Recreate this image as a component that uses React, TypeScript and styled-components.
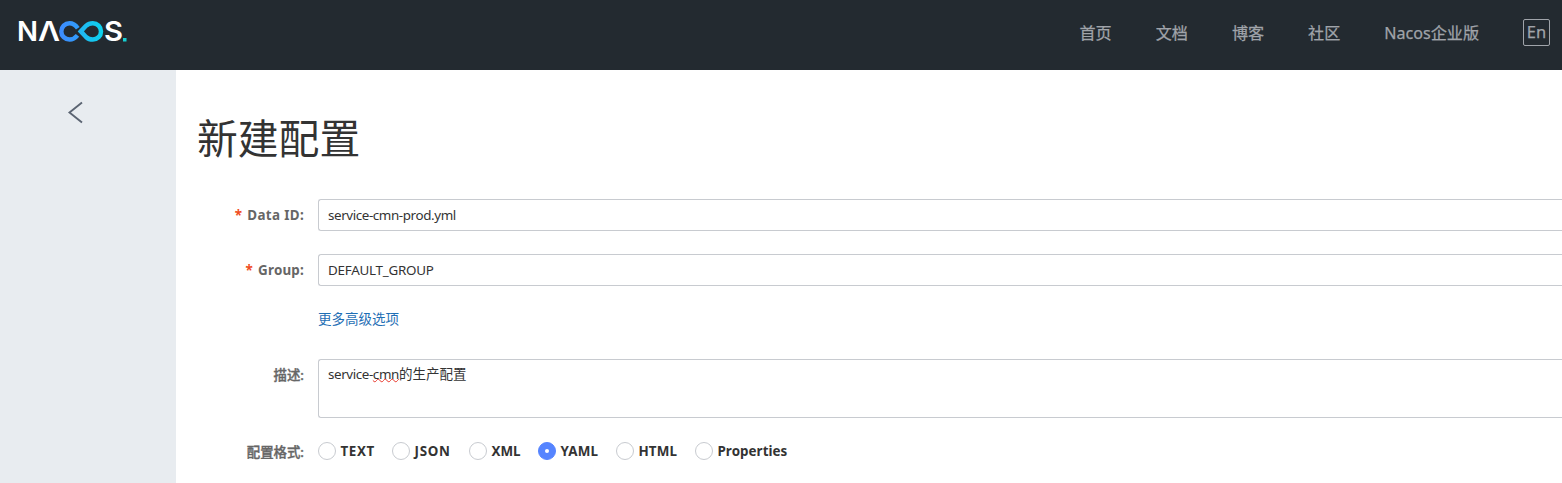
import React from "react";
import styled, { createGlobalStyle } from "styled-components";

const GlobalStyle = createGlobalStyle`
  * { box-sizing: border-box; }
  html, body { margin: 0; height: 100%; overflow: hidden; background: #fff; }
  body { font-family: "Noto Sans", "Noto Sans CJK SC", sans-serif; font-size: 13.4px; color: #333; }
`;

const Page = styled.div`
  height: 483px;
  display: flex;
  flex-direction: column;
  overflow: hidden;
`;

const Header = styled.header`
  height: 70px;
  flex: none;
  display: flex;
  justify-content: space-between;
  background: #232a30;
  padding: 0 12px 0 14px;
`;

const Logo = styled.svg`
  width: 120px;
  height: 44px;
  margin-top: 10px;
  display: block;
  overflow: visible;
`;

const Nav = styled.nav`
  display: flex;
  height: 66px;
  align-items: center;
  gap: 44px;
`;

const NavLink = styled.a`
  color: #a0a4aa;
  font-size: 16.1px;
  line-height: 24px;
  white-space: nowrap;
  -webkit-text-stroke: 0.25px #a0a4aa;
`;

const LangButton = styled.button`
  width: 27px;
  height: 27px;
  margin-top: -2px;
  padding: 0 0 2px;
  border: 1px solid #a0a4aa;
  border-radius: 2px;
  background: transparent;
  color: #a0a4aa;
  font: 16.5px/23px "Noto Sans", sans-serif;
  -webkit-text-stroke: 0.25px #a0a4aa;
`;

const Body = styled.div`
  flex: 1;
  display: flex;
  min-height: 0;
`;

const Sidebar = styled.aside`
  width: 176px;
  flex: none;
  background: #e8ecf0;
  padding: 31px 0 0 67px;
`;

const BackIcon = styled.svg`
  width: 17px;
  height: 23px;
  display: block;
`;

const Main = styled.main`
  flex: 1;
  min-width: 0;
  padding: 37px 0 0 21px;
`;

const Title = styled.h1`
  margin: 0 0 32px;
  height: 60px;
  font-size: 40.8px;
  line-height: 60px;
  font-weight: 400;
  color: #333;
  font-family: "Noto Sans CJK SC", sans-serif;
`;

const Field = styled.div<{ $height: number; $gap: number }>`
  display: flex;
  align-items: flex-start;
  height: ${(p) => p.$height}px;
  margin-bottom: ${(p) => p.$gap}px;
`;

const Label = styled.label<{ $spacing?: number; $cjk?: boolean; $line?: number }>`
  width: 107px;
  margin-right: 14px;
  flex: none;
  text-align: right;
  line-height: ${(p) => p.$line ?? 32}px;
  font-weight: ${(p) => (p.$cjk ? 500 : 700)};
  color: #666;
  letter-spacing: ${(p) => p.$spacing ?? 0}px;
  -webkit-text-stroke: ${(p) => (p.$cjk ? 0.35 : 0)}px #666;
  white-space: nowrap;
`;

const Required = styled.span`
  color: #f04e23;
  margin-right: 5px;
`;

const Control = styled.div`
  flex: 1;
  height: 100%;
  border: 1px solid #c8cbd0;
  border-right: 0;
  border-radius: 3px 0 0 3px;
  padding-left: 9px;
  line-height: 31px;
`;

const Multiline = styled(Control)`
  line-height: 20px;
  padding-top: 4px;
`;

const Value = styled.span<{ $spacing?: number; $size?: number }>`
  font-size: ${(p) => p.$size ?? 13.4}px;
  letter-spacing: ${(p) => p.$spacing ?? 0}px;
`;

const Misspelled = styled.span`
  text-decoration: underline wavy #e8382c 1px;
  text-decoration-skip-ink: none;
  text-underline-offset: -0.5px;
`;

const MoreLink = styled.a`
  color: #1f6fb5;
  font-size: 13.5px;
  line-height: 20px;
`;

const Options = styled.div`
  display: flex;
  align-items: center;
  height: 20px;
`;

const Option = styled.label<{ $width: number; $spacing: number }>`
  display: flex;
  align-items: center;
  width: ${(p) => p.$width}px;
  font-weight: 700;
  line-height: 20px;
  letter-spacing: ${(p) => p.$spacing}px;
  white-space: nowrap;
`;

const Radio = styled.span<{ $checked: boolean }>`
  width: 18px;
  height: 18px;
  flex: none;
  margin-right: 4.5px;
  display: flex;
  align-items: center;
  justify-content: center;
  border-radius: 50%;
  border: 1px solid ${(p) => (p.$checked ? "#5584ff" : "#c8cbd0")};
  background: ${(p) => (p.$checked ? "#5584ff" : "#fff")};
  &::after {
    content: "";
    width: 4px;
    height: 4px;
    border-radius: 50%;
    background: #fff;
  }
`;

const formats = [
  { name: "TEXT", width: 74, spacing: 0.6 },
  { name: "JSON", width: 77, spacing: 0.7 },
  { name: "XML", width: 69, spacing: 0 },
  { name: "YAML", width: 78, spacing: 0.2 },
  { name: "HTML", width: 79, spacing: 0.1 },
  { name: "Properties", width: 100, spacing: 0.05 },
];

const links = ["首页", "文档", "博客", "社区", "Nacos企业版"];

export default function App() {
  return (
    <Page>
      <GlobalStyle />
      <Header>
        <Logo viewBox="14 10 120 44" aria-label="Nacos">
          <defs>
            <linearGradient id="loopLeft" x1="59" x2="80" y1="0" y2="0" gradientUnits="userSpaceOnUse">
              <stop stopColor="#3e8bff" />
              <stop offset="1" stopColor="#2f9dfa" />
            </linearGradient>
            <linearGradient id="loopRight" x1="78" x2="103" y1="0" y2="0" gradientUnits="userSpaceOnUse">
              <stop stopColor="#24b4f3" />
              <stop offset="1" stopColor="#0bd3ee" />
            </linearGradient>
          </defs>
          <g fill="#fff" fontFamily="Inter, sans-serif" fontWeight="600" fontSize="27.5">
            <text x="17" y="41" textLength="21" lengthAdjust="spacingAndGlyphs">N</text>
            <text x="38" y="41" textLength="22" lengthAdjust="spacingAndGlyphs">Λ</text>
            <text x="104" y="41" textLength="19" lengthAdjust="spacingAndGlyphs">S</text>
          </g>
          <path d="M77.8 28.2C75.4 24.8 72.8 23.200 69.500 23.200a8.200 8.200 0 0 0 0 16.400c3.200 0 5.800-1.600 8-4.200" fill="none" stroke="url(#loopLeft)" strokeWidth="4.500" />
          <path d="M80.800 31.400L86 25.800C88 24 90 23.200 92.800 23.200a8.200 8.200 0 0 1 0 16.400c-2.800 0-4.800-.8-6.800-2.600Z" fill="none" stroke="url(#loopRight)" strokeWidth="4.500" />
          <rect x="123" y="38" width="3.500" height="3.500" fill="#16cfd2" />
        </Logo>
        <Nav>
          {links.map((link) => (
            <NavLink key={link}>{link}</NavLink>
          ))}
          <LangButton>En</LangButton>
        </Nav>
      </Header>
      <Body>
        <Sidebar>
          <BackIcon viewBox="0 0 17 23" fill="none" stroke="#5b6472" strokeWidth="1.900">
            <path d="M15 1.500L2.500 11.500L15 21.500" />
          </BackIcon>
        </Sidebar>
        <Main>
          <Title>新建配置</Title>
          <Field $height={32} $gap={23}>
            <Label $spacing={0.35}><Required>*</Required>Data ID:</Label>
            <Control><Value $spacing={-0.4}>service-cmn-prod.yml</Value></Control>
          </Field>
          <Field $height={32} $gap={23}>
            <Label $spacing={0.2}><Required>*</Required>Group:</Label>
            <Control><Value $spacing={-0.25}>DEFAULT_GROUP</Value></Control>
          </Field>
          <Field $height={20} $gap={30}>
            <Label />
            <MoreLink>更多高级选项</MoreLink>
          </Field>
          <Field $height={59} $gap={23}>
            <Label $cjk>描述:</Label>
            <Multiline>
              <Value $spacing={-0.4}>service-<Misspelled>cmn</Misspelled></Value>
              <Value $size={13.5}>的生产配置</Value>
            </Multiline>
          </Field>
          <Field $height={20} $gap={0}>
            <Label $cjk $line={22}>配置格式:</Label>
            <Options>
              {formats.map((f) => (
                <Option key={f.name} $width={f.width} $spacing={f.spacing}>
                  <Radio $checked={f.name === "YAML"} />
                  {f.name}
                </Option>
              ))}
            </Options>
          </Field>
        </Main>
      </Body>
    </Page>
  );
}
